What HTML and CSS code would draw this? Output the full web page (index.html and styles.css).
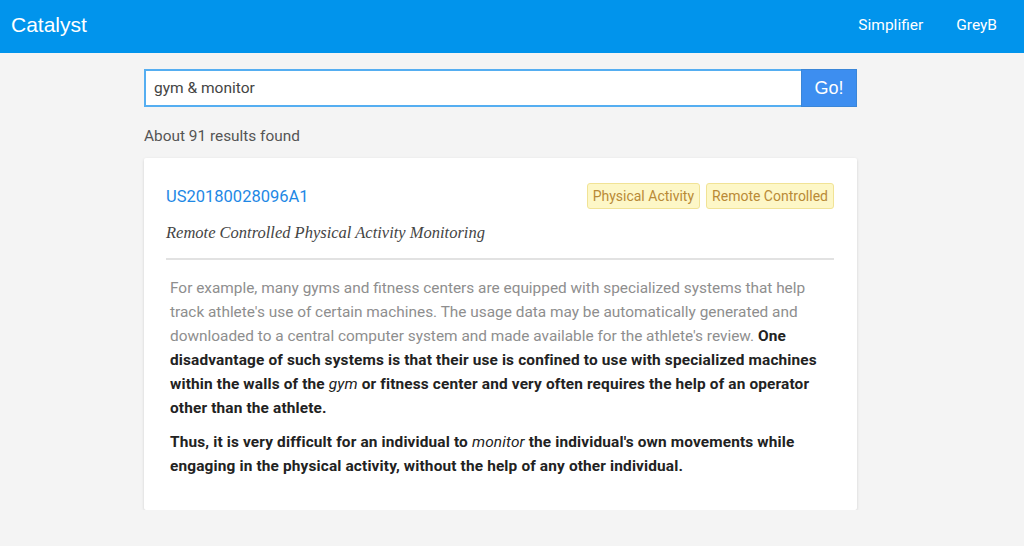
FILE: index.html
```html
<!DOCTYPE html>
<html lang="en">
<head>
    <meta charset="UTF-8">
    <meta name="viewport" content="width=device-width, initial-scale=1.0">
    <title>Catalyst</title>
    <link rel="stylesheet" href="styles.css">
</head>
<body>

    <nav class="navbar">
        <a class="brand" href="#">Catalyst</a>
        <div class="nav-links">
            <a href="#">Simplifier</a>
            <a href="#">GreyB</a>
        </div>
    </nav>

    <div class="container">
        <form class="search" onsubmit="return false;">
            <input type="text" class="search-input" value="gym &amp; monitor">
            <button type="submit" class="search-btn">Go!</button>
        </form>

        <p class="results-count">About 91 results found</p>

        <div class="result">
            <div class="result-head">
                <a class="patent-id" href="#">US20180028096A1</a>
                <div class="tags">
                    <span class="tag">Physical Activity</span>
                    <span class="tag">Remote Controlled</span>
                </div>
            </div>
            <h2 class="result-title">Remote Controlled Physical Activity Monitoring</h2>
            <div class="result-body">
                <p><span class="muted">For example, many gyms and fitness centers are equipped with specialized systems that help track athlete's use of certain machines. The usage data may be automatically generated and downloaded to a central computer system and made available for the athlete's review.</span> <b>One disadvantage of such systems is that their use is confined to use with specialized machines within the walls of the <i>gym</i> or fitness center and very often requires the help of an operator other than the athlete.</b></p>
                <p><b>Thus, it is very difficult for an individual to <i>monitor</i> the individual's own movements while engaging in the physical activity, without the help of any other individual.</b></p>
            </div>
        </div>
    </div>

</body>
</html>
```

FILE: styles.css
```css
body {
    margin: 0;
    background-color: #f4f4f4;
    font-family: Roboto, "Liberation Sans", sans-serif;
    color: #555;
}
a {
    text-decoration: none;
}
.navbar {
    height: 53px;
    background-color: #0194ec;
    display: flex;
    align-items: center;
    justify-content: space-between;
    padding: 0 27px 0 11px;
}
.brand {
    color: white;
    font-size: 21px;
    font-family: "Liberation Sans", sans-serif;
    padding-bottom: 4px;
}
.nav-links {
    display: flex;
    gap: 33px;
    padding-bottom: 4px;
}
.nav-links a {
    color: white;
    font-size: 15.5px;
}
.container {
    width: 713px;
    margin-left: calc(50% - 368px);
    padding-top: 16px;
}
.search {
    display: flex;
    height: 38px;
}
.search-input {
    flex: 1;
    border: 2px solid #55aef1;
    border-right: none;
    padding: 0 8px;
    font-family: Roboto, "Liberation Sans", sans-serif;
    font-size: 15.5px;
    color: #444;
    outline: none;
}
.search-btn {
    width: 56px;
    background-color: #3d8ef0;
    border: 1px solid #3a86d8;
    color: white;
    font-family: "Liberation Sans", sans-serif;
    font-size: 18px;
    padding: 0;
}
.results-count {
    margin: 20px 0 13px 0;
    font-size: 15.4px;
    color: #555;
}
.result {
    background: white;
    box-shadow: 0 1px 3px rgba(0, 0, 0, 0.15);
    border-radius: 2px;
    padding: 25px 23px 32px 22px;
}
.result-head {
    display: flex;
    justify-content: space-between;
    align-items: center;
}
.patent-id {
    color: #1e88e5;
    font-size: 16.5px;
}
.tags {
    display: flex;
    gap: 6px;
}
.tag {
    background-color: #fdf7c7;
    border: 1px solid #f1e396;
    border-radius: 3px;
    color: #b98a36;
    font-size: 14px;
    padding: 4px 5px;
}
.result-title {
    margin: 14px 0 0 0;
    font-family: "Liberation Serif", serif;
    font-style: italic;
    font-weight: normal;
    font-size: 16.5px;
    color: #444;
    padding-bottom: 15px;
    border-bottom: 2px solid #e2e2e2;
}
.result-body {
    padding: 16px 4px 0 4px;
    font-size: 15.4px;
    line-height: 24px;
}
.result-body p {
    margin: 0 0 10px 0;
}
.result-body p:last-child {
    margin-bottom: 0;
}
.muted {
    color: #8e8e8e;
}
.result-body b {
    color: #222;
    font-weight: bold;
    letter-spacing: 0.15px;
}
.result-body i {
    font-weight: normal;
}
```
